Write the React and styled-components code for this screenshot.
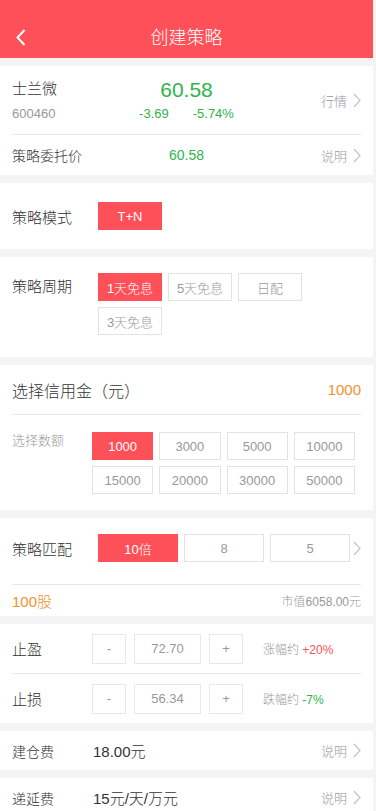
import React from "react";
import styled, { createGlobalStyle } from "styled-components";

const RED = "#fe5058";
const GREEN = "#2fb44c";
const ORANGE = "#f3902e";

const GlobalStyle = createGlobalStyle`
  html, body {
    margin: 0;
    padding: 0;
    background: #f4f4f4;
  }
  body {
    font-family: "Liberation Sans", "Noto Sans CJK SC", sans-serif;
    font-weight: 300;
    color: #333;
  }
  * { box-sizing: border-box; }
`;

const Back = () => (
  <svg width="10" height="17" viewBox="0 0 10 17">
    <polyline points="8.5,1 1.5,8.5 8.5,16" fill="none" stroke="#fff" strokeWidth="2" />
  </svg>
);

const Chevron = () => (
  <svg width="8" height="15" viewBox="0 0 8 15">
    <polyline points="1,1 7,7.5 1,14" fill="none" stroke="#c6c6c6" strokeWidth="1.3" />
  </svg>
);

const App = () => {
  return (
    <Page>
      <GlobalStyle />
      <Header>
        <BackBtn>
          <Back />
        </BackBtn>
        <Title>创建策略</Title>
      </Header>

      <Panel>
        <StockRow>
          <StockCol>
            <Name>士兰微</Name>
            <Code>600460</Code>
          </StockCol>
          <PriceCol>
            <Price>60.58</Price>
            <Changes>
              <span>-3.69</span>
              <span>-5.74%</span>
            </Changes>
          </PriceCol>
          <More>
            行情 <Chevron />
          </More>
        </StockRow>
        <Divider />
        <EntrustRow>
          <Label size={14}>策略委托价</Label>
          <EntrustPrice>60.58</EntrustPrice>
          <More>
            说明 <Chevron />
          </More>
        </EntrustRow>
      </Panel>

      <Panel>
        <OptionRow pad={19}>
          <Label width={86}>策略模式</Label>
          <Options>
            <Option active width={64}>T+N</Option>
          </Options>
        </OptionRow>
      </Panel>

      <Panel>
        <OptionRow pad={16} padBottom={16} top>
          <Label width={86} line={28}>策略周期</Label>
          <Options wrap>
            <Option active width={64}>1天免息</Option>
            <Option width={64}>5天免息</Option>
            <Option width={64}>日配</Option>
            <Option width={64}>3天免息</Option>
          </Options>
        </OptionRow>
      </Panel>

      <Panel>
        <HeadRow>
          <Label size={16}>选择信用金（元）</Label>
          <Amount>1000</Amount>
        </HeadRow>
        <Divider />
        <OptionRow pad={17} padBottom={16} top>
          <Label width={80} size={13} muted line={18}>选择数额</Label>
          <AmountGrid>
            {["1000", "3000", "5000", "10000", "15000", "20000", "30000", "50000"].map((v, i) => (
              <Option key={v} active={i === 0}>{v}</Option>
            ))}
          </AmountGrid>
        </OptionRow>
      </Panel>

      <Panel>
        <OptionRow pad={16} padBottom={22}>
          <Label width={86}>策略匹配</Label>
          <MatchOptions>
            <Option active>10倍</Option>
            <Option>8</Option>
            <Option>5</Option>
          </MatchOptions>
          <MatchArrow>
            <Chevron />
          </MatchArrow>
        </OptionRow>
        <Divider />
        <ShareRow>
          <Shares>100股</Shares>
          <MarketValue>市值6058.00元</MarketValue>
        </ShareRow>
      </Panel>

      <Panel>
        <StopRow>
          <Label width={80}>止盈</Label>
          <Stepper>
            <StepBox>-</StepBox>
            <ValueBox>72.70</ValueBox>
            <StepBox>+</StepBox>
          </Stepper>
          <Hint>
            涨幅约 <HintValue color={RED}>+20%</HintValue>
          </Hint>
        </StopRow>
        <Divider />
        <StopRow>
          <Label width={80}>止损</Label>
          <Stepper>
            <StepBox>-</StepBox>
            <ValueBox>56.34</ValueBox>
            <StepBox>+</StepBox>
          </Stepper>
          <Hint>
            跌幅约 <HintValue color={GREEN}>-7%</HintValue>
          </Hint>
        </StopRow>
      </Panel>

      <Panel>
        <FeeRow>
          <Label width={81} size={14}>建仓费</Label>
          <FeeValue>18.00元</FeeValue>
          <More>
            说明 <Chevron />
          </More>
        </FeeRow>
      </Panel>

      <Panel>
        <FeeRow>
          <Label width={81} size={14}>递延费</Label>
          <FeeValue>15元/天/万元</FeeValue>
          <More>
            说明 <Chevron />
          </More>
        </FeeRow>
      </Panel>
    </Page>
  );
};

export default App;

const Page = styled.div`
  width: 373px;
  min-height: 811px;
  background: #f4f4f4;
  padding-bottom: 20px;
`;

const Header = styled.header`
  position: relative;
  height: 58px;
  background: ${RED};
  display: flex;
  align-items: center;
  justify-content: center;
  padding-top: 14px;
`;

const BackBtn = styled.div`
  position: absolute;
  left: 16px;
  top: 29px;
  display: flex;
`;

const Title = styled.h1`
  margin: 0;
  color: #fff;
  font-size: 18px;
  font-weight: 300;
`;

const Panel = styled.section`
  background: #fff;
  margin-top: 8px;
  padding: 0 12px;
`;

const Divider = styled.div`
  height: 1px;
  background: #e8e8e8;
`;

const StockRow = styled.div`
  height: 68px;
  display: grid;
  grid-template-columns: 1fr auto 1fr;
  align-items: center;
`;

const StockCol = styled.div`
  display: flex;
  flex-direction: column;
  gap: 6px;
  padding-top: 2px;
`;

const Name = styled.div`
  font-size: 15px;
  color: #333;
  line-height: 20px;
`;

const Code = styled.div`
  font-size: 13px;
  color: #999;
  line-height: 18px;
`;

const PriceCol = styled.div`
  display: flex;
  flex-direction: column;
  align-items: center;
  gap: 3px;
`;

const Price = styled.div`
  font-size: 21px;
  color: ${GREEN};
  line-height: 24px;
`;

const Changes = styled.div`
  display: flex;
  gap: 24px;
  font-size: 13px;
  color: ${GREEN};
  line-height: 18px;
`;

const More = styled.div`
  justify-self: end;
  margin-left: auto;
  display: flex;
  align-items: center;
  gap: 6px;
  font-size: 13px;
  color: #999;
`;

const EntrustRow = styled.div`
  height: 40px;
  display: grid;
  grid-template-columns: 1fr auto 1fr;
  align-items: center;
`;

const EntrustPrice = styled.div`
  font-size: 14px;
  color: ${GREEN};
`;

const Label = styled.div`
  flex: none;
  width: ${(p) => (p.width ? `${p.width}px` : "auto")};
  font-size: ${(p) => p.size || 15}px;
  color: ${(p) => (p.muted ? "#999" : "#333")};
  line-height: ${(p) => (p.line ? `${p.line}px` : "normal")};
`;

const OptionRow = styled.div`
  display: flex;
  align-items: ${(p) => (p.top ? "flex-start" : "center")};
  padding-top: ${(p) => p.pad}px;
  padding-bottom: ${(p) => (p.padBottom != null ? p.padBottom : p.pad)}px;
`;

const Options = styled.div`
  display: flex;
  flex-wrap: ${(p) => (p.wrap ? "wrap" : "nowrap")};
  gap: 6px;
  width: ${(p) => (p.wrap ? "210px" : "auto")};
  padding-bottom: ${(p) => (p.wrap ? "6px" : "0")};
`;

const Option = styled.div`
  width: ${(p) => (p.width ? `${p.width}px` : "auto")};
  height: 28px;
  display: flex;
  align-items: center;
  justify-content: center;
  font-size: 13px;
  color: ${(p) => (p.active ? "#fff" : "#999")};
  background: ${(p) => (p.active ? RED : "#fff")};
  border: 1px solid ${(p) => (p.active ? RED : "#e3e3e3")};
`;

const HeadRow = styled.div`
  height: 49px;
  display: flex;
  align-items: center;
  justify-content: space-between;
`;

const Amount = styled.div`
  font-size: 15px;
  color: ${ORANGE};
`;

const AmountGrid = styled.div`
  flex: 1;
  display: grid;
  grid-template-columns: repeat(4, 1fr);
  gap: 6px;
  padding-right: 6px;
`;

const MatchOptions = styled.div`
  flex: 1;
  display: grid;
  grid-template-columns: repeat(3, 1fr);
  gap: 6px;
`;

const MatchArrow = styled.div`
  display: flex;
  margin-left: 3px;
`;

const ShareRow = styled.div`
  height: 31px;
  display: flex;
  align-items: center;
  justify-content: space-between;
`;

const Shares = styled.div`
  font-size: 15px;
  color: ${ORANGE};
`;

const MarketValue = styled.div`
  font-size: 12px;
  color: #999;
`;

const StopRow = styled.div`
  height: 49px;
  display: flex;
  align-items: center;
`;

const Stepper = styled.div`
  display: flex;
  gap: 8px;
`;

const StepBox = styled.div`
  width: 34px;
  height: 30px;
  display: flex;
  align-items: center;
  justify-content: center;
  border: 1px solid #e8e8e8;
  font-size: 13px;
  color: #999;
`;

const ValueBox = styled(StepBox)`
  width: 67px;
`;

const Hint = styled.div`
  margin-left: 20px;
  font-size: 12px;
  color: #999;
`;

const HintValue = styled.span`
  color: ${(p) => p.color};
`;

const FeeRow = styled.div`
  height: 39px;
  display: flex;
  align-items: center;
`;

const FeeValue = styled.div`
  font-size: 15px;
  color: #333;
`;
